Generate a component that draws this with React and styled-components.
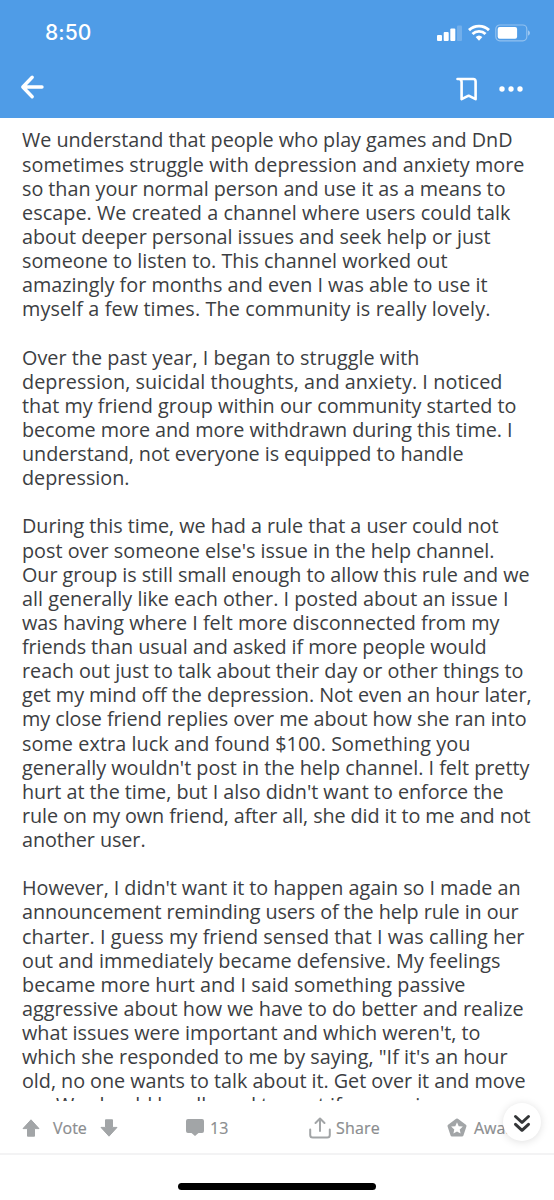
import React, { useLayoutEffect, useRef } from 'react';
import styled, { createGlobalStyle } from 'styled-components';

const Global = createGlobalStyle`
  * { box-sizing: border-box; }
  body { margin: 0; background: #fff; font-family: "Open Sans", sans-serif; }
`;

const Screen = styled.div`
  width: 554px;
  height: 1200px;
  overflow: hidden;
  display: flex;
  flex-direction: column;
  background: #fff;
`;

const Header = styled.header`
  flex: none;
  height: 118px;
  background: #4f9ce7;
  color: #fff;
`;

const StatusBar = styled.div`
  height: 66px;
  padding: 0 23px 0 45px;
  display: flex;
  align-items: center;
  justify-content: space-between;
`;

const Clock = styled.span`
  font: 500 21px/24px Inter, sans-serif;
  letter-spacing: 0.1px;
`;

const NavBar = styled.nav`
  height: 46px;
  padding: 0 31px 0 20px;
  display: flex;
  align-items: center;
`;

const BackButton = styled.div`
  display: flex;
  padding-bottom: 5px;
`;

const NavActions = styled.div`
  margin-left: auto;
  display: flex;
  align-items: center;
  gap: 21px;
`;

const Article = styled.main`
  flex: none;
  height: 983px;
  padding: 10.4px 22px 0;
  overflow: hidden;
  color: #3c3e42;
`;

const Paragraph = styled.section`
  margin-bottom: 24.13px;
`;

const Line = styled.div`
  width: max-content;
  height: 24.13px;
  font-size: 19.8px;
  line-height: 24.13px;
  white-space: nowrap;
`;

const ActionBar = styled.footer`
  flex: none;
  position: relative;
  height: 54px;
  padding: 1px 0 0 22px;
  border-bottom: 2px solid #f3f3f4;
  display: flex;
  align-items: center;
  color: #8b8d8f;
`;

const Action = styled.div`
  flex: none;
  width: ${(p) => p.$width}px;
  display: flex;
  align-items: center;
  gap: ${(p) => p.$gap}px;
`;

const Label = styled.span`
  font-size: 16px;
  line-height: 22px;
  letter-spacing: ${(p) => p.$track || 0}px;
  -webkit-text-stroke: 0.2px currentColor;
`;

const JumpButton = styled.button`
  position: absolute;
  right: 13px;
  top: 2px;
  width: 38px;
  height: 38px;
  padding: 2px 0 0;
  border: 0;
  border-radius: 50%;
  background: #fff;
  box-shadow: 0 1px 8px rgba(0, 0, 0, 0.13);
  display: flex;
  align-items: center;
  justify-content: center;
`;

const HomeArea = styled.div`
  flex: 1;
  display: flex;
  justify-content: center;
  padding-top: 27.500px;
`;

const HomeIndicator = styled.div`
  width: 198px;
  height: 7px;
  border-radius: 4px;
  background: #000;
`;

const TEXT_LEFT = 22;

// Each line is tracked so that it ends at its own right edge.
const paragraphs = [
  [
    ['We understand that people who play games and DnD', 512],
    ['sometimes struggle with depression and anxiety more', 524],
    ['so than your normal person and use it as a means to', 505],
    ['escape. We created a channel where users could talk', 510],
    ['about deeper personal issues and seek help or just', 490],
    ['someone to listen to. This channel worked out', 447],
    ['amazingly for months and even I was able to use it', 487],
    ['myself a few times. The community is really lovely.', 490],
  ],
  [
    ['Over the past year, I began to struggle with', 419],
    ['depression, suicidal thoughts, and anxiety. I noticed', 502],
    ['that my friend group within our community started to', 516],
    ['become more and more withdrawn during this time. I', 512],
    ['understand, not everyone is equipped to handle', 463],
    ['depression.', 129],
  ],
  [
    ['During this time, we had a rule that a user could not', 498],
    ["post over someone else's issue in the help channel.", 494],
    ['Our group is still small enough to allow this rule and we', 529],
    ['all generally like each other. I posted about an issue I', 508],
    ['was having where I felt more disconnected from my', 499],
    ['friends than usual and asked if more people would', 486],
    ['reach out just to talk about their day or other things to', 523],
    ['get my mind off the depression. Not even an hour later,', 531],
    ['my close friend replies over me about how she ran into', 526],
    ['some extra luck and found $100. Something you', 470],
    ["generally wouldn't post in the help channel. I felt pretty", 529],
    ["hurt at the time, but I also didn't want to enforce the", 503],
    ['rule on my own friend, after all, she did it to me and not', 530],
    ['another user.', 145],
  ],
  [
    ["However, I didn't want it to happen again so I made an", 520],
    ['announcement reminding users of the help rule in our', 518],
    ['charter. I guess my friend sensed that I was calling her', 524],
    ['out and immediately became defensive. My feelings', 500],
    ['became more hurt and I said something passive', 465],
    ['aggressive about how we have to do better and realize', 523],
    ["what issues were important and which weren't, to", 480],
    ['which she responded to me by saying, "If it\'s an hour', 507],
    ['old, no one wants to talk about it. Get over it and move', 525],
    ['on. We should be allowed to post if no one is', 429],
  ],
];

function TextLine({ text, right }) {
  const ref = useRef(null);
  useLayoutEffect(() => {
    const el = ref.current;
    const fit = () => {
      el.style.letterSpacing = '0px';
      const natural = el.getBoundingClientRect().width;
      const gap = (right + 0.5 - TEXT_LEFT - natural) / text.length;
      el.style.letterSpacing = `${gap}px`;
    };
    fit();
    document.fonts.ready.then(fit);
  }, [text, right]);
  return <Line ref={ref}>{text}</Line>;
}

const Signal = () => (
  <svg width="26" height="18" viewBox="0 0 26 18" fill="#fff">
    <rect x="0" y="11" width="5" height="6" rx="1" />
    <rect x="6.7" y="8" width="5" height="9" rx="1" />
    <rect x="13.3" y="4.5" width="5" height="12.5" rx="1" />
    <rect x="20" y="1.5" width="5" height="15.5" rx="1" opacity=".2" />
  </svg>
);

const Wifi = () => (
  <svg width="22" height="18" viewBox="0 0 22 18" fill="none" stroke="#fff" strokeWidth="2.9">
    <path d="M1 6.1a14.6 14.6 0 0 1 20 0" />
    <path d="M4.5 10a9.3 9.3 0 0 1 13 0" />
    <path d="M7.6 13.1a5 5 0 0 1 6.800 0L11 16.800z" fill="#fff" stroke="none" />
  </svg>
);

const Battery = () => (
  <svg width="36" height="18" viewBox="0 0 36 18">
    <rect x=".8" y="1" width="31" height="15.8" rx="4" fill="none" stroke="#fff" strokeOpacity=".38" strokeWidth="1.2" />
    <rect x="2.7" y="3" width="19.4" height="11.8" rx="2" fill="#fff" />
    <path d="M33 6.5c2.6.5 2.6 4.6 0 5z" fill="#fff" opacity=".45" />
  </svg>
);

const StatusIcons = styled.div`
  display: flex;
  align-items: center;
  gap: 5px;
`;

const Back = () => (
  <svg width="25" height="26" viewBox="0 0 25 26" fill="none" stroke="#fff" strokeWidth="3.4" strokeLinecap="round" strokeLinejoin="round">
    <path d="M12.200 3.300 2.8 13l9.400 9.700M3.5 13H22" />
  </svg>
);

const Bookmark = () => (
  <svg width="22" height="26" viewBox="0 0 22 26" fill="none" stroke="#fff" strokeWidth="2.6" strokeLinejoin="round" strokeLinecap="round">
    <path d="M1.500 3h15.700Q19.6 3 19.6 5.5V23.200l-7-3.500-7 3.500V6Q5.600 3 3 3" />
  </svg>
);

const Dots = () => (
  <svg width="24" height="6" viewBox="0 0 24 6" fill="#fff">
    <circle cx="3" cy="3" r="2.7" />
    <circle cx="12" cy="3" r="2.7" />
    <circle cx="21" cy="3" r="2.7" />
  </svg>
);

const Arrow = ({ down }) => (
  <svg width="18" height="18" viewBox="0 0 18 18" fill="#a2a5a7" stroke="#a2a5a7" strokeWidth="1" strokeLinejoin="round">
    <path transform={down ? 'rotate(180 9 9)' : undefined} d="M9 .8 17 9.6h-4.5v7.6h-7V9.6H1z" />
  </svg>
);

const Comment = () => (
  <svg width="18" height="17" viewBox="0 0 18 17" fill="#a2a5a7">
    <path d="M2 0h14q2 0 2 2v10q0 2-2 2h-3.5L9 17l-3.500-3H2q-2 0-2-2V2Q0 0 2 0z" />
  </svg>
);

const Share = () => (
  <svg width="22" height="22" viewBox="0 0 22 22" fill="none" stroke="#a2a5a7" strokeWidth="2" strokeLinecap="round" strokeLinejoin="round">
    <path d="M11 14V2M6.500 6 11 1.500 15.500 6M1.200 12.500V18q0 2.600 2.600 2.600h14.400q2.600 0 2.600-2.600v-5.500" />
  </svg>
);

const Award = () => (
  <svg width="20" height="20" viewBox="0 0 20 20" strokeLinejoin="round">
    <path d="M10 2 18 8l-3 9H5L2 8z" fill="#a2a5a7" stroke="#a2a5a7" strokeWidth="3" />
    <path d="m10 4.300 1.700 3.900 4.200.4-3.200 2.800.9 4.200L10 13.500l-3.600 2.100.9-4.200-3.200-2.800 4.200-.4z" fill="#fff" />
  </svg>
);

const Chevrons = () => (
  <svg width="18" height="19" viewBox="0 0 18 19" fill="none" stroke="#343638" strokeWidth="3" strokeLinecap="round" strokeLinejoin="round">
    <path d="m2.500 2.500 6.500 6 6.500-6M2.500 10.300l6.500 6 6.500-6" />
  </svg>
);

export default function App() {
  return (
    <Screen>
      <Global />
      <Header>
        <StatusBar>
          <Clock>8:50</Clock>
          <StatusIcons><Signal /><Wifi /><Battery /></StatusIcons>
        </StatusBar>
        <NavBar>
          <BackButton><Back /></BackButton>
          <NavActions><Bookmark /><Dots /></NavActions>
        </NavBar>
      </Header>
      <Article>
        {paragraphs.map((lines, i) => (
          <Paragraph key={i}>
            {lines.map(([text, right]) => <TextLine key={text} text={text} right={right} />)}
          </Paragraph>
        ))}
      </Article>
      <ActionBar>
        <Action $width={164} $gap={13}><Arrow /><Label>Vote</Label><Arrow down /></Action>
        <Action $width={123} $gap={6}><Comment /><Label>13</Label></Action>
        <Action $width={138} $gap={5}><Share /><Label $track={0.2}>Share</Label></Action>
        <Action $width={90} $gap={7}><Award /><Label>Award</Label></Action>
        <JumpButton aria-label="Next comment"><Chevrons /></JumpButton>
      </ActionBar>
      <HomeArea><HomeIndicator /></HomeArea>
    </Screen>
  );
}
